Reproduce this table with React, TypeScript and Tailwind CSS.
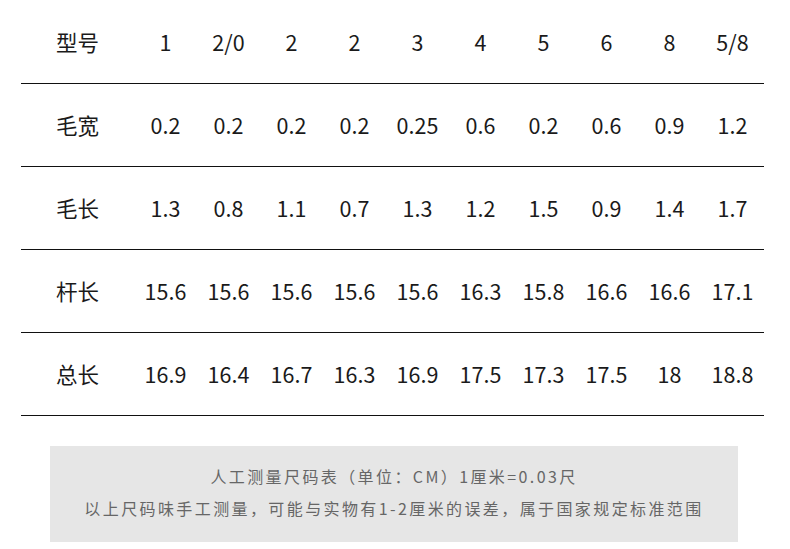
import React from "react";

const rows: string[][] = [
  ["型号", "1", "2/0", "2", "2", "3", "4", "5", "6", "8", "5/8"],
  ["毛宽", "0.2", "0.2", "0.2", "0.2", "0.25", "0.6", "0.2", "0.6", "0.9", "1.2"],
  ["毛长", "1.3", "0.8", "1.1", "0.7", "1.3", "1.2", "1.5", "0.9", "1.4", "1.7"],
  ["杆长", "15.6", "15.6", "15.6", "15.6", "15.6", "16.3", "15.8", "16.6", "16.6", "17.1"],
  ["总长", "16.9", "16.4", "16.7", "16.3", "16.9", "17.5", "17.3", "17.5", "18", "18.8"],
];

export default function App() {
  return (
    <div
      className="w-[790px] h-[549px] bg-white overflow-hidden pt-[1px]"
      style={{ fontFamily: '"Noto Sans CJK SC", "Noto Sans", sans-serif' }}
    >
      <div className="ml-[21px] w-[743px]">
        {rows.map((r, i) => (
          <div
            key={i}
            className="grid grid-cols-[113px_repeat(10,63px)] h-[83px] items-center border-b-[1.5px] border-[#111] text-[21.5px] text-[#1a1a1a]"
          >
            {r.map((c, j) => (
              <div key={j} className="text-center">
                {c}
              </div>
            ))}
          </div>
        ))}
      </div>
      <div className="ml-[50px] mt-[30px] w-[688px] h-[96px] bg-[#e6e6e6] pt-[14px] flex flex-col items-center text-[#666] text-[16px] tracking-[2.4px]">
        <div className="h-[32px] leading-[32px]">人工测量尺码表（单位：CM）1厘米=0.03尺</div>
        <div className="h-[32px] leading-[32px]">以上尺码味手工测量，可能与实物有1-2厘米的误差，属于国家规定标准范围</div>
      </div>
    </div>
  );
}
